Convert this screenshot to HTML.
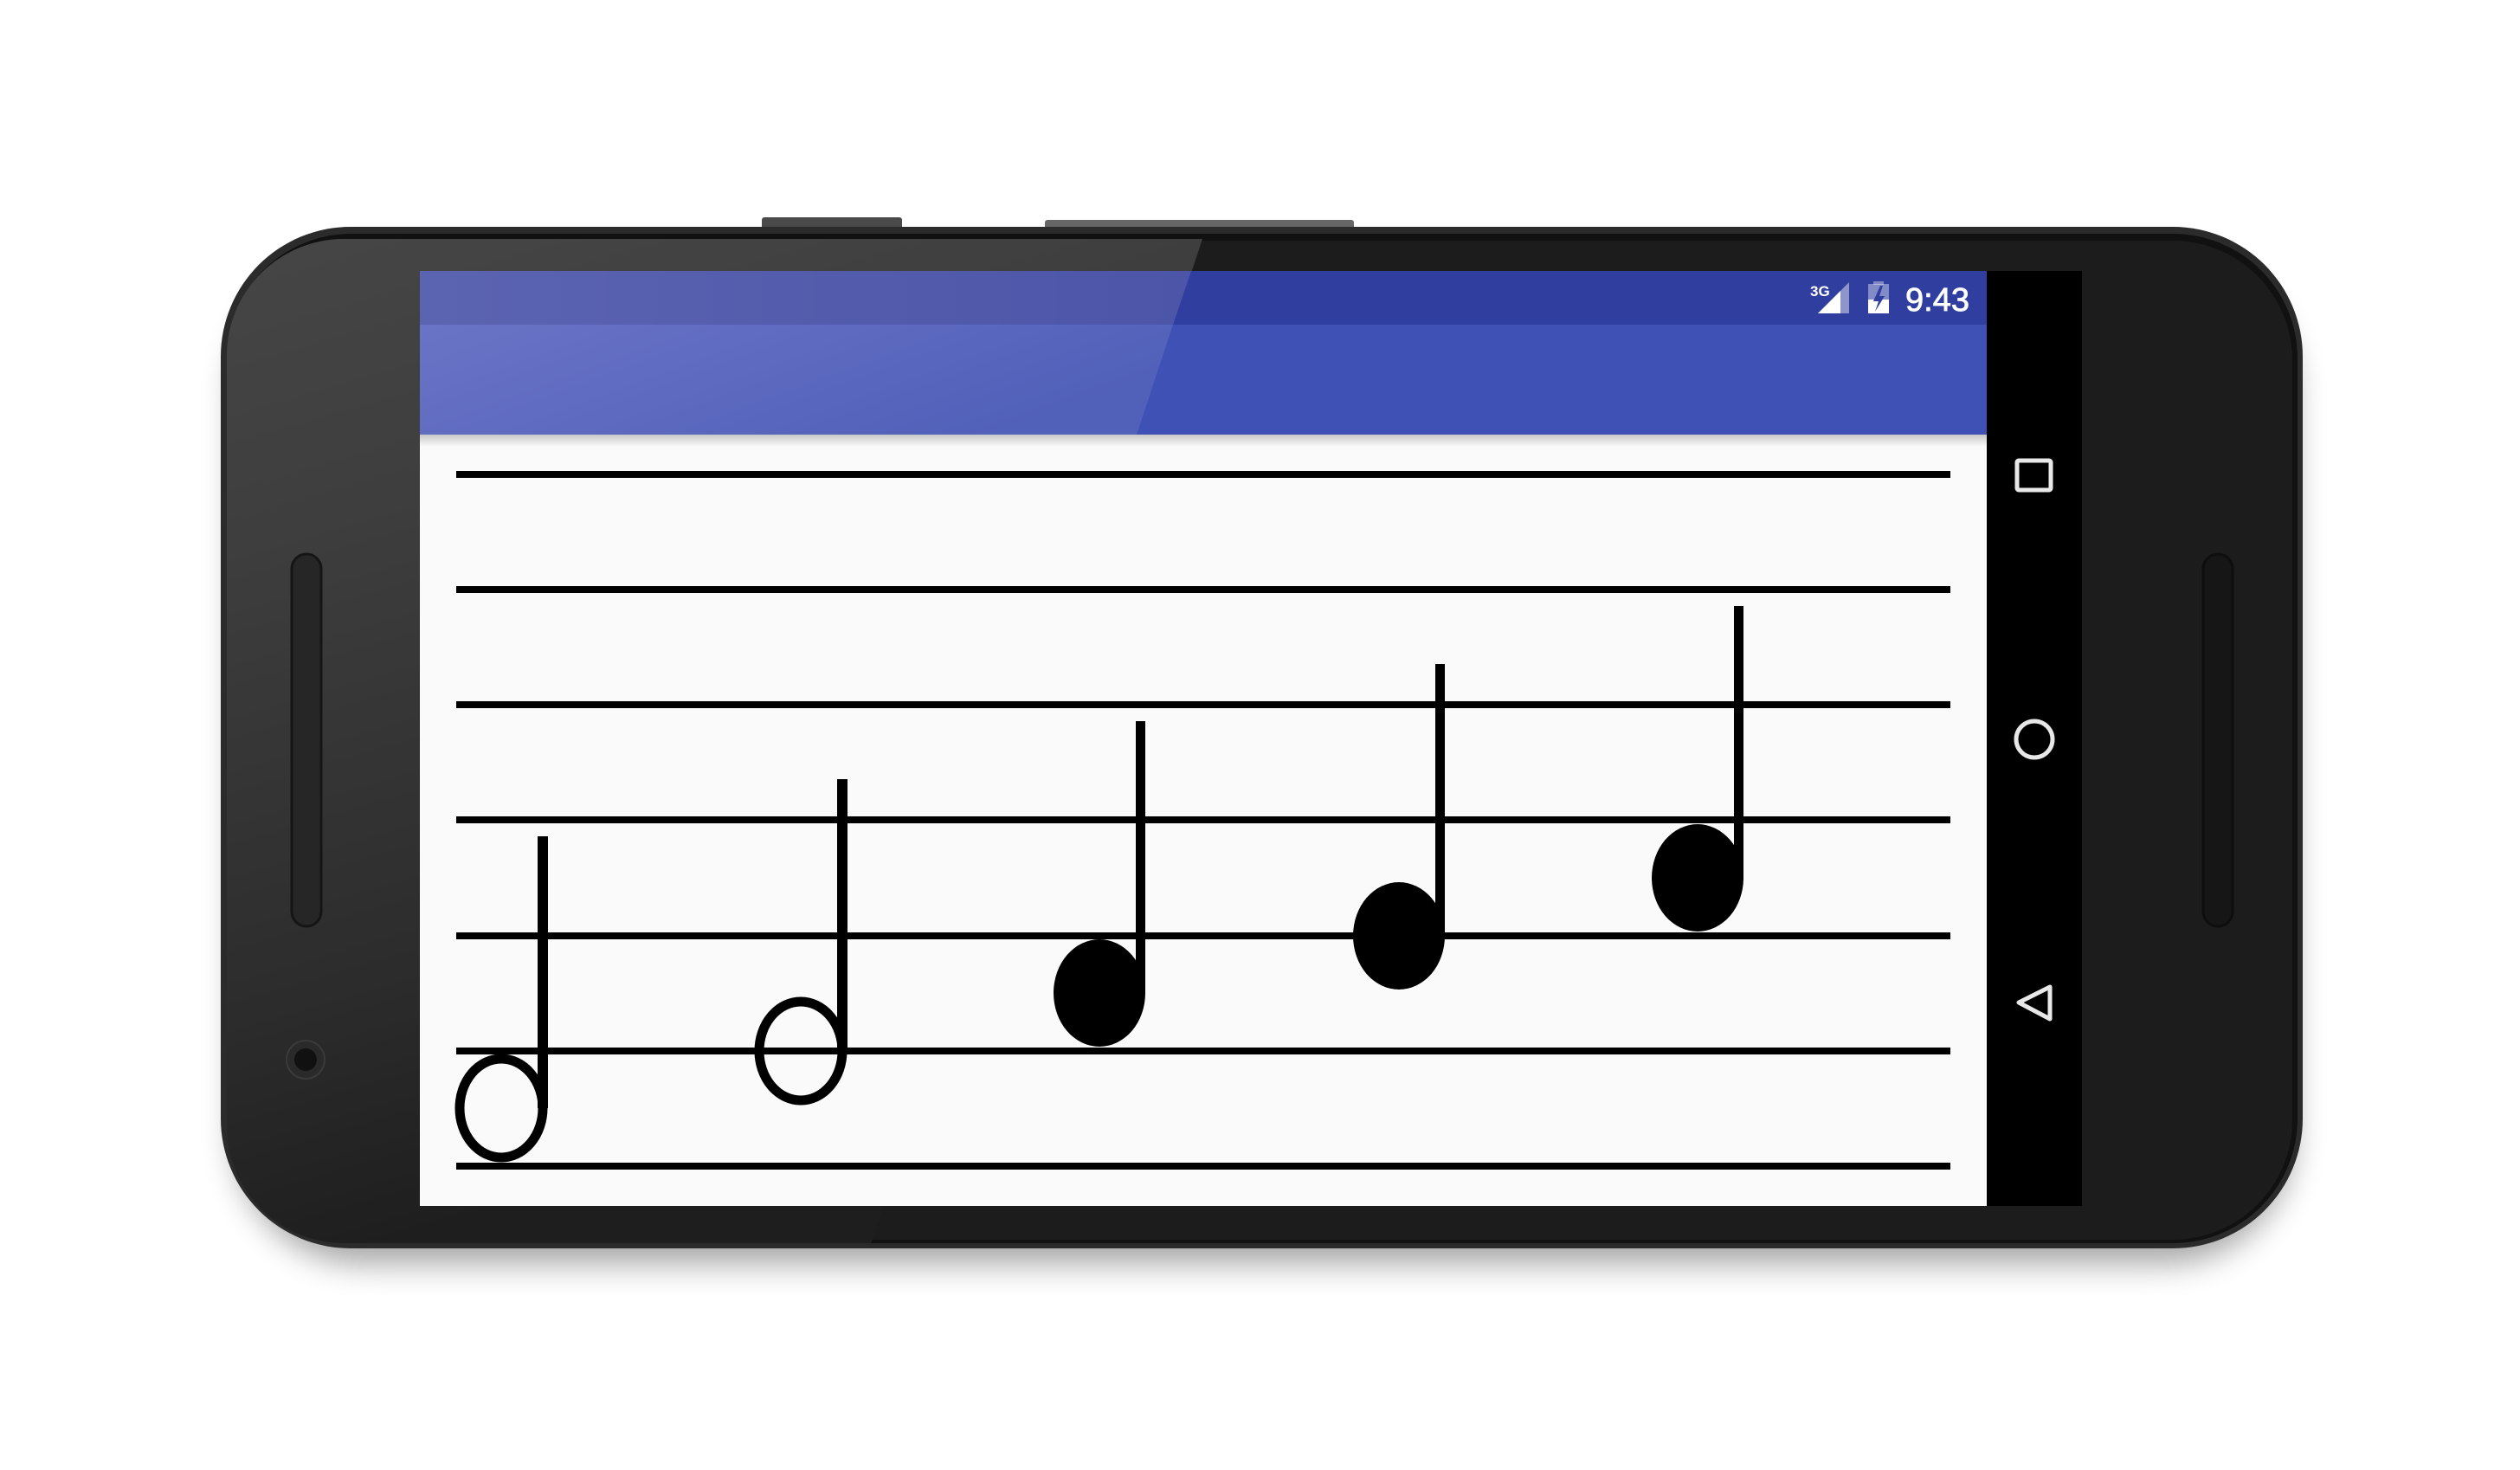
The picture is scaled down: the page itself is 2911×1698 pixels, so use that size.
<!DOCTYPE html>
<html><head><meta charset="utf-8"><style>
html,body{margin:0;padding:0;background:#fff;width:2911px;height:1698px;overflow:hidden}
svg{display:block}
</style></head><body>
<svg width="2911" height="1698" viewBox="0 0 2911 1698" xmlns="http://www.w3.org/2000/svg">
<defs>
<filter id="sh" x="-10%" y="-10%" width="120%" height="130%"><feGaussianBlur stdDeviation="18"/></filter>
<linearGradient id="tb" x1="0" y1="0" x2="1" y2="0.4">
<stop offset="0" stop-color="#6a74c6"/><stop offset="1" stop-color="#5160b9"/></linearGradient>
<linearGradient id="sb" x1="0" y1="0" x2="1" y2="0">
<stop offset="0" stop-color="#5b64b1"/><stop offset="1" stop-color="#4c55a8"/></linearGradient>
<linearGradient id="bodyL" x1="0" y1="0" x2="0.3" y2="1">
<stop offset="0" stop-color="#4e4e4e"/><stop offset="0.45" stop-color="#3e3e3e"/><stop offset="0.8" stop-color="#2c2c2c"/><stop offset="1" stop-color="#1e1e1e"/></linearGradient>
<clipPath id="phoneclip"><rect x="262" y="276" width="2392" height="1160" rx="135"/></clipPath>
<linearGradient id="tbsh" x1="0" y1="0" x2="0" y2="1"><stop offset="0" stop-color="#000" stop-opacity="0.2"/><stop offset="1" stop-color="#000" stop-opacity="0"/></linearGradient>
</defs>
<rect x="270" y="300" width="2380" height="1160" rx="150" fill="#000" opacity="0.35" filter="url(#sh)"/>
<rect x="880" y="251" width="162" height="20" rx="3" fill="#4a4a4a"/>
<rect x="1207" y="254" width="357" height="16" rx="3" fill="#666"/>
<rect x="255" y="262" width="2405" height="1180" rx="150" fill="#2b2b2b"/>
<rect x="262" y="270" width="2392" height="1166" rx="144" fill="#111"/>
<rect x="268" y="278" width="2380" height="1154" rx="138" fill="#1c1c1c"/>
<g clip-path="url(#phoneclip)">
<polygon points="0,0 1480,0 1005,1440 0,1440" fill="url(#bodyL)"/>
</g>
<rect x="337" y="640" width="34" height="430" rx="17" fill="#262626" stroke="#151515" stroke-width="3"/>
<rect x="2545" y="640" width="34" height="430" rx="17" fill="#161616" stroke="#0e0e0e" stroke-width="3"/>
<circle cx="353" cy="1224" r="22" fill="#2a2a2a" stroke="#3a3a3a" stroke-width="2"/>
<circle cx="353" cy="1224" r="13" fill="#111"/>
<rect x="485" y="313" width="1810" height="1080" fill="#fafafa"/>
<rect x="485" y="313" width="1810" height="62" fill="#303f9f"/>
<rect x="485" y="375" width="1810" height="127" fill="#3f51b5"/>
<polygon points="485,313 1376,313 1355,375 485,375" fill="url(#sb)"/>
<polygon points="485,375 1355,375 1313,502 485,502" fill="url(#tb)"/>
<rect x="485" y="502" width="1810" height="14" fill="url(#tbsh)"/>
<rect x="2295" y="313" width="110" height="1080" fill="#000"/>
<text x="2091" y="342" font-family="Liberation Sans, sans-serif" font-weight="bold" font-size="17" fill="#fff">3G</text>
<polygon points="2100,362 2136,326 2136,362" fill="#fff" opacity="0.45"/>
<polygon points="2100,362 2126,336 2126,362" fill="#fff"/>
<rect x="2158" y="328" width="24" height="34" fill="#fff" opacity="0.4"/>
<rect x="2164" y="325" width="12" height="4" fill="#fff" opacity="0.4"/>
<rect x="2158" y="346" width="24" height="16" fill="#fff"/>
<polygon points="2172,330 2164,348 2170,348 2166,360 2177,342 2171,342 2175,330" fill="#303f9f"/>
<text x="2201" y="359" font-family="Liberation Sans, sans-serif" font-size="38" fill="#fff" stroke="#fff" stroke-width="0.8">9:43</text>
<rect x="2330" y="532" width="39" height="34" rx="2" fill="none" stroke="#e8e8e8" stroke-width="5"/>
<circle cx="2350" cy="854" r="21" fill="none" stroke="#e8e8e8" stroke-width="5"/>
<polygon points="2332,1158 2368,1140 2368,1177" fill="none" stroke="#e8e8e8" stroke-width="5" stroke-linejoin="round"/>
<g fill="#000">
<rect x="527" y="544" width="1726" height="8"/>
<rect x="527" y="677" width="1726" height="8"/>
<rect x="527" y="810" width="1726" height="8"/>
<rect x="527" y="943" width="1726" height="8"/>
<rect x="527" y="1077" width="1726" height="8"/>
<rect x="527" y="1210" width="1726" height="8"/>
<rect x="527" y="1343" width="1726" height="8"/>
</g>
<g fill="#000">
<ellipse cx="579" cy="1280" rx="48" ry="57" fill="none" stroke="#000" stroke-width="11"/>
<rect x="621" y="966" width="12" height="314"/>
<ellipse cx="925" cy="1214" rx="48" ry="57" fill="none" stroke="#000" stroke-width="11"/>
<rect x="967" y="900" width="12" height="314"/>
<ellipse cx="1270" cy="1147" rx="53" ry="62"/>
<rect x="1312" y="833" width="11" height="314"/>
<ellipse cx="1616" cy="1081" rx="53" ry="62"/>
<rect x="1658" y="767" width="11" height="314"/>
<ellipse cx="1961" cy="1014" rx="53" ry="62"/>
<rect x="2003" y="700" width="11" height="314"/>
</g>
</svg>
</body></html>
